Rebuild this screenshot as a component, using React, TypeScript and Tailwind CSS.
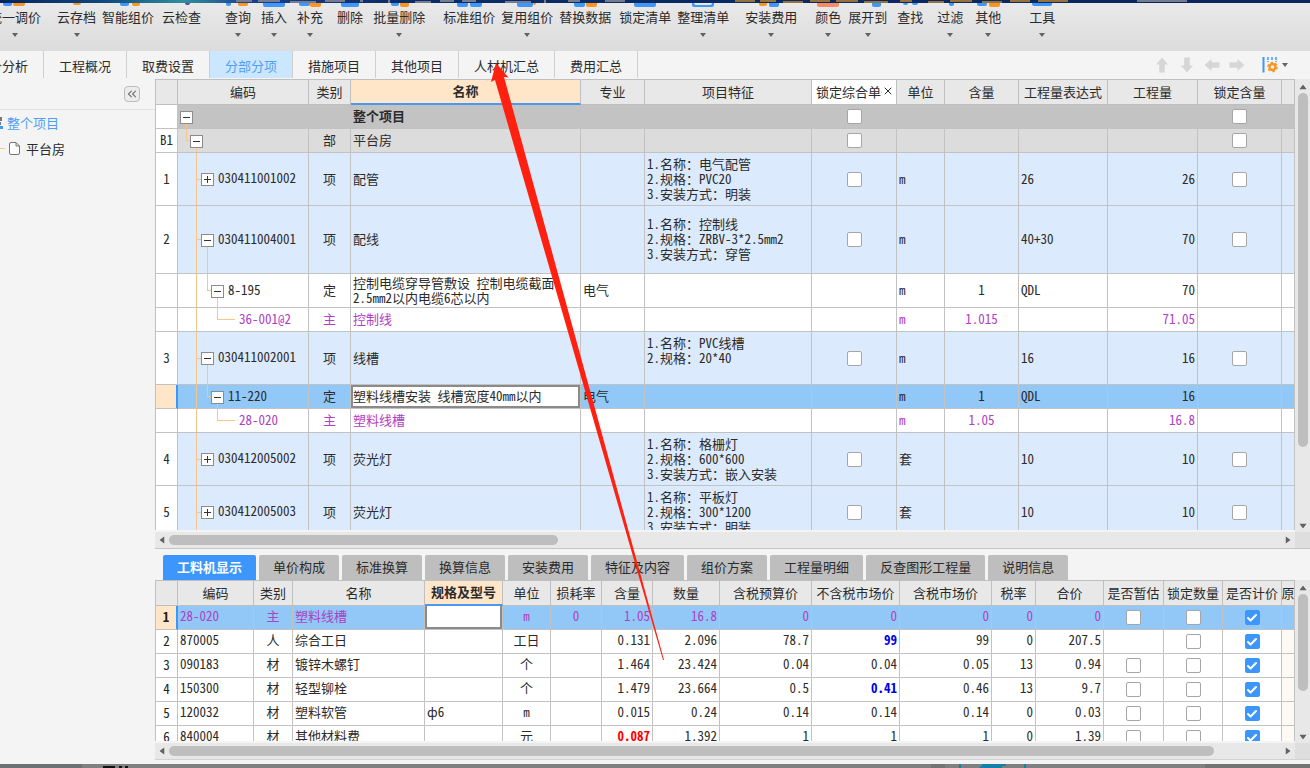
import React, { useState } from 'react';
import { Check, ChevronsLeft, X } from 'lucide-react';

type Shape = [number, number, number, string];

const BLUE = '#3f97f7';
const ORANGE = '#fb9420';

const tools: { label: string; gap: string; menu?: boolean; shapes: Shape[] }[] = [
  { label: '统一调价', gap: '', menu: true, shapes: [[8, 9, 3, BLUE], [18, 12, 3, ORANGE]] },
  { label: '云存档', gap: 'ml-2.5', menu: true, shapes: [[16, 8, 2, ORANGE]] },
  { label: '智能组价', gap: '', shapes: [[12, 9, 3, BLUE], [24, 8, 3, ORANGE]] },
  { label: '云检查', gap: 'ml-0.5', shapes: [[23, 5, 2, '#6b3fae']] },
  { label: '查询', gap: 'ml-4.5', menu: true, shapes: [[8, 5, 3, BLUE], [20, 10, 3, ORANGE]] },
  { label: '插入', gap: 'ml-1', menu: true, shapes: [[9, 22, 4, BLUE]] },
  { label: '补充', gap: 'ml-1', menu: true, shapes: [[9, 11, 3, BLUE], [20, 11, 4, ORANGE]] },
  { label: '删除', gap: 'ml-2', shapes: [[11, 18, 4, BLUE]] },
  { label: '批量删除', gap: 'ml-1', menu: true, shapes: [[12, 8, 3, BLUE], [21, 9, 4, ORANGE]] },
  { label: '标准组价', gap: 'ml-3', shapes: [[8, 11, 4, BLUE], [21, 12, 4, BLUE]] },
  { label: '复用组价', gap: '', menu: true, shapes: [[10, 16, 4, BLUE], [26, 3, 2, ORANGE]] },
  { label: '替换数据', gap: '', shapes: [[9, 11, 4, BLUE], [21, 11, 4, ORANGE]] },
  { label: '锁定清单', gap: 'ml-0.5', shapes: [[9, 22, 4, BLUE]] },
  { label: '整理清单', gap: '', menu: true, shapes: [[9, 22, 4, BLUE], [11, 18, 2, '#e8e8e8']] },
  { label: '安装费用', gap: 'ml-2.5', menu: true, shapes: [[8, 8, 3, ORANGE], [18, 10, 4, BLUE]] },
  { label: '颜色', gap: 'ml-3', menu: true, shapes: [[9, 22, 4, '#f98a62']] },
  { label: '展开到', gap: 'ml-px', menu: true, shapes: [[24, 9, 4, BLUE]] },
  { label: '查找', gap: 'ml-1', shapes: [[13, 5, 2, BLUE], [22, 6, 2, BLUE]] },
  { label: '过滤', gap: 'ml-2', menu: true, shapes: [[19, 5, 3, BLUE]] },
  { label: '其他', gap: 'ml-1.5', menu: true, shapes: [[9, 10, 3, BLUE], [21, 11, 4, ORANGE]] },
  { label: '工具', gap: 'ml-5.5', menu: true, shapes: [[10, 20, 3, BLUE]] },
];

const pages = ['造价分析', '工程概况', '取费设置', '分部分项', '措施项目', '其他项目', '人材机汇总', '费用汇总'];

const details = ['工料机显示', '单价构成', '标准换算', '换算信息', '安装费用', '特征及内容', '组价方案', '工程量明细', '反查图形工程量', '说明信息'];

type Item = {
  no: string;
  level: number;
  open?: boolean;
  code: string;
  kind: string;
  name: string;
  major?: string;
  feature?: string;
  unit?: string;
  content?: string;
  expr?: string;
  qty?: string;
  locks?: boolean;
  height: string;
  tone: string;
  selected?: boolean;
};

const group = 'bg-[#dceafd]';
const material = 'bg-white text-[#b040c4]';

const items: Item[] = [
  { no: '', level: 0, open: true, code: '', kind: '', name: '整个项目', locks: true, height: 'h-6', tone: 'bg-[#c3c3c3] font-bold' },
  { no: 'B1', level: 1, open: true, code: '', kind: '部', name: '平台房', locks: true, height: 'h-6', tone: 'bg-[#dcdcdc]' },
  { no: '1', level: 2, code: '030411001002', kind: '项', name: '配管', feature: '1.名称：电气配管\n2.规格：PVC20\n3.安装方式：明装', unit: 'm', expr: '26', qty: '26', locks: true, height: 'h-[53px]', tone: group },
  { no: '2', level: 2, open: true, code: '030411004001', kind: '项', name: '配线', feature: '1.名称：控制线\n2.规格：ZRBV-3*2.5mm2\n3.安装方式：穿管', unit: 'm', expr: '40+30', qty: '70', locks: true, height: 'h-[68px]', tone: group },
  { no: '', level: 3, open: true, code: '8-195', kind: '定', name: '控制电缆穿导管敷设 控制电缆截面\n2.5mm2以内电缆6芯以内', major: '电气', unit: 'm', content: '1', expr: 'QDL', qty: '70', height: 'h-[34px]', tone: 'bg-white' },
  { no: '', level: 4, code: '36-001@2', kind: '主', name: '控制线', unit: 'm', content: '1.015', qty: '71.05', height: 'h-6', tone: material },
  { no: '3', level: 2, open: true, code: '030411002001', kind: '项', name: '线槽', feature: '1.名称：PVC线槽\n2.规格：20*40\n ', unit: 'm', expr: '16', qty: '16', locks: true, height: 'h-[53px]', tone: group },
  { no: '', level: 3, open: true, code: '11-220', kind: '定', name: '塑料线槽安装 线槽宽度40mm以内', major: '电气', unit: 'm', content: '1', expr: 'QDL', qty: '16', height: 'h-6', tone: 'bg-[#92c8f7]', selected: true },
  { no: '', level: 4, code: '28-020', kind: '主', name: '塑料线槽', unit: 'm', content: '1.05', qty: '16.8', height: 'h-6', tone: material },
  { no: '4', level: 2, code: '030412005002', kind: '项', name: '荧光灯', feature: '1.名称：格栅灯\n2.规格：600*600\n3.安装方式：嵌入安装', unit: '套', expr: '10', qty: '10', locks: true, height: 'h-[53px]', tone: group },
  { no: '5', level: 2, code: '030412005003', kind: '项', name: '荧光灯', feature: '1.名称：平板灯\n2.规格：300*1200\n3.安装方式：明装', unit: '套', expr: '10', qty: '10', locks: true, height: 'h-[53px]', tone: group },
];

// code, kind, name, spec, unit, loss, content, qty, budget, net market, gross market, rate, total
const resources: { cells: string[]; estimate: boolean }[] = [
  { cells: ['28-020', '主', '塑料线槽', '', 'm', '0', '1.05', '16.8', '0', '0', '0', '0', '0'], estimate: true },
  { cells: ['870005', '人', '综合工日', '', '工日', '', '0.131', '2.096', '78.7', '99', '99', '0', '207.5'], estimate: false },
  { cells: ['090183', '材', '镀锌木螺钉', '', '个', '', '1.464', '23.424', '0.04', '0.04', '0.05', '13', '0.94'], estimate: true },
  { cells: ['150300', '材', '轻型铆栓', '', '个', '', '1.479', '23.664', '0.5', '0.41', '0.46', '13', '9.7'], estimate: true },
  { cells: ['120032', '材', '塑料软管', 'ф6', 'm', '', '0.015', '0.24', '0.14', '0.14', '0.14', '0', '0.03'], estimate: true },
  { cells: ['840004', '材', '其他材料费', '', '元', '', '0.087', '1.392', '1', '1', '1', '0', '1.39'], estimate: true },
];

const itemCols = ['w-[22px]', 'w-[131px]', 'w-[42px]', 'w-[230px]', 'w-[64px]', 'w-[167px]', 'w-[85px]', 'w-[48px]', 'w-[74px]', 'w-[89px]', 'w-[90px]', 'w-[84px]', ''];
const itemHeads = ['', '编码', '类别', '名称', '专业', '项目特征', '锁定综合单价', '单位', '含量', '工程量表达式', '工程量', '锁定含量', ''];

const resourceCols = ['w-[22px]', 'w-[76px]', 'w-[39px]', 'w-[132px]', 'w-[78px]', 'w-[48px]', 'w-[51px]', 'w-[51px]', 'w-[67px]', 'w-[92px]', 'w-[88px]', 'w-[92px]', 'w-[44px]', 'w-[68px]', 'w-[60px]', 'w-[59px]', 'w-[59px]', ''];
const resourceHeads = ['', '编码', '类别', '名称', '规格及型号', '单位', '损耗率', '含量', '数量', '含税预算价', '不含税市场价', '含税市场价', '税率', '合价', '是否暂估', '锁定数量', '是否计价', '原'];
const resourceAlign = ['', 'text-center', '', '', 'text-center', 'text-center', 'text-right', 'text-right', 'text-right', 'text-right', 'text-right', 'text-right', 'text-right'];

const head = 'h-[26px] border-y border-r border-[#bfbfbf] px-0 pt-0 pb-0.5 overflow-hidden whitespace-nowrap';
const activeHead = 'border-b-2 border-b-[#4a98f5] bg-[#ffe6c9] font-bold';
const plain = 'border-b border-r border-[#c2c2c2] p-0 overflow-hidden';
const cell = 'border-b border-r border-[#c2c2c2] px-0.5 pt-0 pb-0.5 overflow-hidden whitespace-pre';
const lowCell = 'border-b border-r border-[#c2c2c2] px-0.5 pt-0 pb-1 overflow-hidden whitespace-pre';

const Caret = ({ className = '' }: { className?: string }) => (
  <svg viewBox="0 0 6 4" className={`h-1 w-1.5 ${className}`} aria-hidden="true">
    <path d="M0 0h6L3 4z" fill="#626262" />
  </svg>
);

const Box = ({ label, on = false }: { label: string; on?: boolean }) => (
  <label className="mx-auto grid size-[15px] place-items-center">
    <input
      type="checkbox"
      aria-label={label}
      defaultChecked={on}
      className="peer col-start-1 row-start-1 size-[15px] appearance-none rounded-xs border border-[#a6a6a6] bg-white checked:border-[#3d96fb] checked:bg-[#3d96fb]"
    />
    <Check className="pointer-events-none col-start-1 row-start-1 hidden size-3 text-white peer-checked:block" strokeWidth={4} />
  </label>
);

const Arm = ({ width }: { width: string }) => (
  <span className={`${width} shrink-0`}>
    <span className="block h-1/2 border-b border-l border-[#f7c587]" />
  </span>
);

const Tree = ({ item }: { item: Item }) => (
  <div className={`flex items-stretch ${item.height}`}>
    {item.level === 0 && <span className="w-0.5 shrink-0" />}
    {item.level === 1 && <span className="w-2 shrink-0" />}
    {item.level > 1 && <span className="w-[18px] shrink-0" />}
    {item.level === 1 && <Arm width="w-1" />}
    {item.level === 2 && (
      <span className="w-[5px] shrink-0 border-l border-[#f7c587]">
        <span className="block h-1/2 border-b border-[#f7c587]" />
      </span>
    )}
    {item.level === 3 && <span className="w-[11px] shrink-0 border-l border-[#f7c587]" />}
    {item.level === 3 && <Arm width="w-1" />}
    {item.level === 4 && <span className="w-[21px] shrink-0 border-l border-[#f7c587]" />}
    {item.level === 4 && <Arm width="w-[18px]" />}
    {item.level < 4 && (
      <span className="flex w-[13px] shrink-0 flex-col items-center">
        <span className="flex-1" />
        <button type="button" aria-label={item.open ? '折叠' : '展开'} className="block size-[13px] border border-[#8c8c8c] bg-white">
          <svg viewBox="0 0 11 11" className="block size-[11px]">
            <path d={item.open ? 'M2 5.5h7' : 'M2 5.5h7M5.5 2v7'} stroke="#333" strokeWidth="1" fill="none" />
          </svg>
        </button>
        <span className={`w-px flex-1 ${item.open ? 'bg-[#f7c587]' : ''}`} />
      </span>
    )}
    <span className="self-center pb-1 pl-1">{item.code}</span>
  </div>
);

const VScroll = ({ thumb }: { thumb: string }) => (
  <div className="flex flex-col items-center bg-[#e8e8e8] pt-1.5 pb-1">
    <Caret className="rotate-180 scale-125" />
    <div className="flex w-full flex-1 flex-col items-center py-1">
      <div className={`w-[10px] rounded-full bg-[#bebebe] ${thumb}`} />
    </div>
    <Caret className="scale-125" />
  </div>
);

const HScroll = ({ thumb }: { thumb: string }) => (
  <div className="flex items-center bg-[#e8e8e8] pr-1 pl-1">
    <Caret className="rotate-90 scale-125" />
    <div className="flex-1 px-1">
      <div className={`h-[10px] rounded-full bg-[#bebebe] ${thumb}`} />
    </div>
    <Caret className="-rotate-90 scale-125" />
  </div>
);

const ItemTable = () => (
  <table className="w-full table-fixed border-separate border-spacing-0 border-l border-[#bfbfbf] leading-[15px]">
    <colgroup>
      {itemCols.map((width, i) => (
        <col key={i} className={width} />
      ))}
    </colgroup>
    <thead>
      <tr>
        {itemHeads.map((title, i) => (
          <th key={i} className={`${head} ${i === 3 ? activeHead : i === 6 ? 'bg-white font-normal' : 'bg-[#e8e8e8] font-normal'}`}>
            {i === 6 ? (
              <span className="flex items-center pl-1">
                <span className="flex-1 overflow-hidden">{title}</span>
                <X className="mr-0.5 size-3" />
              </span>
            ) : (
              title
            )}
          </th>
        ))}
      </tr>
    </thead>
    <tbody>
      {items.map((item, i) => (
        <tr key={i} className={`${item.height} ${item.tone}`}>
          <th
            className={`${cell} text-center font-normal ${
              item.selected ? 'border-r-2 border-r-[#3d96fb] bg-[#ffe6c9]' : 'bg-white'
            }`}
          >
            {item.no}
          </th>
          <td className={plain}>
            <div className="-mb-px">
              <Tree item={item} />
            </div>
          </td>
          <td className={`${cell} text-center`}>{item.kind}</td>
          {item.selected ? (
            <td className={plain}>
              <input
                aria-label="名称"
                defaultValue={item.name}
                className="block h-[23px] w-full border-2 border-[#8a8a8a] bg-white pb-0.5 outline-none"
              />
            </td>
          ) : (
            <td className={cell}>{item.name}</td>
          )}
          <td className={cell}>{item.major}</td>
          <td className={cell}>{item.feature}</td>
          <td className={plain}>{item.locks && <Box label="锁定综合单价" />}</td>
          <td className={cell}>{item.unit}</td>
          <td className={`${cell} text-center`}>{item.content}</td>
          <td className={cell}>{item.expr}</td>
          <td className={`${cell} text-right`}>{item.qty}</td>
          <td className={plain}>{item.locks && <Box label="锁定含量" />}</td>
          <td className={plain} />
        </tr>
      ))}
    </tbody>
  </table>
);

const emphasis = (row: number, col: number) => {
  if (col === 9 && (row === 1 || row === 3)) return 'font-bold text-[#0000e6]';
  if (col === 6 && row === 5) return 'font-bold text-[#f00]';
  return '';
};

const ResourceTable = () => (
  <table className="w-full table-fixed border-separate border-spacing-0 border-l border-[#bfbfbf] leading-[15px]">
    <colgroup>
      {resourceCols.map((width, i) => (
        <col key={i} className={width} />
      ))}
    </colgroup>
    <thead>
      <tr>
        {resourceHeads.map((title, i) => (
          <th key={i} className={`${head} ${i === 4 ? activeHead : 'bg-[#e8e8e8] font-normal'}`}>
            <span className="flex justify-center">{title}</span>
          </th>
        ))}
      </tr>
    </thead>
    <tbody>
      {resources.map((row, r) => (
        <tr key={r} className={`h-6 ${r === 0 ? 'bg-[#92c8f7] text-[#b040c4]' : 'bg-white'}`}>
          <th
            className={`${cell} text-center text-[#222] ${
              r === 0 ? 'border-r-2 border-r-[#3d96fb] bg-[#ffe6c9] font-bold' : 'bg-white font-normal'
            }`}
          >
            {r + 1}
          </th>
          {row.cells.map((text, c) =>
            r === 0 && c === 3 ? (
              <td key={c} className={plain}>
                <input aria-label="规格及型号" className="block h-[23px] w-full border-2 border-t-0 border-[#8a8a8a] bg-white outline-none" />
              </td>
            ) : (
              <td key={c} className={`${lowCell} ${resourceAlign[c]} ${emphasis(r, c)}`}>
                {text}
              </td>
            )
          )}
          <td className={plain}>{row.estimate && <Box label="是否暂估" />}</td>
          <td className={plain}>
            <Box label="锁定数量" />
          </td>
          <td className={plain}>
            <Box label="是否计价" on />
          </td>
          <td className={`${plain} ${r === 0 ? '' : 'bg-[#fdf9f3]'}`} />
        </tr>
      ))}
    </tbody>
  </table>
);

const FatArrow = ({ turn, label }: { turn: string; label: string }) => (
  <button type="button" aria-label={label} className="size-4">
    <svg viewBox="0 0 16 16" className={`size-4 ${turn}`}>
      <path d="M8 .5 14 7.500h-3.200V15.500H5.200V7.500H2z" fill="#d6d6d6" />
    </svg>
  </button>
);

const App = () => {
  const [page, setPage] = useState('分部分项');
  const [detail, setDetail] = useState('工料机显示');

  return (
    <div className="relative flex h-screen flex-col overflow-hidden bg-[#f4f4f4] font-['Noto_Sans_Mono_CJK_SC','Noto_Sans_CJK_SC',sans-serif] text-[13px] text-[#2b2b2b]">
      {/* Edge of the window behind */}
      <svg viewBox="0 0 1310 3" preserveAspectRatio="none" className="block h-[3px] w-full shrink-0" aria-hidden="true">
        <defs>
          <linearGradient id="sky">
            <stop offset="0" stopColor="#07245c" />
            <stop offset="0.08" stopColor="#10487f" />
            <stop offset="0.14" stopColor="#2f8f9b" />
            <stop offset="0.19" stopColor="#1a3f8f" />
            <stop offset="0.3" stopColor="#0b2c66" />
            <stop offset="1" stopColor="#0a2560" />
          </linearGradient>
        </defs>
        <path d="M0 0h1310v3H0z" fill="url(#sky)" />
        <path d="M236 1h16M258 1h22M290 2h26M325 1h20M360 1h3M389 0v3M415 2h16M440 1h14M462 1h14M505 2h26M545 0v3M568 1h12M605 1h20M1137 1h50" stroke="#737c90" strokeWidth="2" />
        <path d="M735 1h20M760 1h16M783 2h20M810 1h20M836 1h22M864 2h24M900 1h12M928 2h16M950 1h22M982 2h20M1010 1h20M1038 1h30" stroke="#94723d" strokeWidth="2" />
      </svg>

      {/* Toolbar */}
      <div className="flex h-12 shrink-0 items-start overflow-hidden bg-gradient-to-b from-[#e9e9e9] to-[#dcdcdc]">
        {tools.map((tool, i) => (
          <button
            key={tool.label}
            type="button"
            className={`flex shrink-0 flex-col items-center px-[3px] leading-4 whitespace-nowrap ${tool.gap} ${i === 0 ? '-ml-3.5' : ''}`}
          >
            <svg viewBox="0 0 40 4" className="-mx-2 h-1 w-10" aria-hidden="true">
              {tool.shapes.map(([x, w, h, fill], n) => (
                <rect key={n} x={x} y={-4} width={w} height={h + 4} rx="2" fill={fill} />
              ))}
            </svg>
            <span className="mt-0.5">{tool.label}</span>
            {tool.menu && <Caret className="mt-2" />}
          </button>
        ))}
      </div>

      {/* Page tabs */}
      <div className="flex h-7 shrink-0 items-stretch justify-between pr-[22px]">
        <nav className="flex h-[27px] overflow-hidden">
          {pages.map((name, i) => (
            <button
              key={name}
              type="button"
              onClick={() => setPage(name)}
              className={`shrink-0 border-r border-[#cfcfcf] px-[15px] pt-0.5 whitespace-nowrap ${i === 0 ? '-ml-[39px]' : ''} ${
                page === name ? 'bg-[#cbe6ff] text-[#4f9ff5]' : ''
              }`}
            >
              {name}
            </button>
          ))}
        </nav>
        <div className="flex items-center gap-[9px]">
          <FatArrow turn="" label="上移" />
          <FatArrow turn="rotate-180" label="下移" />
          <FatArrow turn="-rotate-90" label="左移" />
          <FatArrow turn="rotate-90" label="右移" />
          <button type="button" aria-label="列设置" className="ml-2 flex items-center gap-1">
            <svg viewBox="0 0 16 16" className="size-4">
              <path d="M1.500 0v15.500" stroke="#3f97f7" strokeWidth="2" />
              <path d="M6 0v5M10 0v4M14 0v5" stroke="#3f97f7" strokeWidth="1.500" strokeDasharray="3 1" />
              <circle cx="10.500" cy="10" r="3" fill="none" stroke="#fb9420" strokeWidth="2.400" />
              <circle cx="10.500" cy="10" r="4.600" fill="none" stroke="#fb9420" strokeWidth="1.400" strokeDasharray="2.400 2.400" />
            </svg>
            <Caret />
          </button>
        </div>
      </div>

      <div className="flex min-h-0 flex-1">
        {/* Project tree */}
        <aside className="w-[155px] shrink-0">
          <div className="flex h-[31px] justify-end border-b border-[#e2e2e2] pt-[7px] pr-[15px]">
            <button type="button" aria-label="收起" className="grid size-4 place-items-center rounded-sm border border-[#bdbdbd] bg-[#ececec] text-[#777]">
              <ChevronsLeft className="size-3.5" />
            </button>
          </div>
          <ul>
            <li className="flex h-[26px] items-center gap-1 text-[#4f9ff5]">
              <svg viewBox="0 0 3 14" className="h-3.5 w-[3px]" aria-hidden="true">
                <path d="M0 1h2v4H0zM0 6h1v3H0z" fill="#777" />
                <path d="M0 10h3v3H0z" fill="#3f97f7" />
              </svg>
              <a href="#project">整个项目</a>
            </li>
            <li className="flex h-[25px] items-center">
              <span className="mr-1 h-px w-[5px] bg-[#f7c587]" />
              <svg viewBox="0 0 11 13" className="mr-1.5 h-[13px] w-[11px]" fill="white" stroke="#777" aria-hidden="true">
                <path d="M.5 2Q.5.5 2 .5h5l3.500 3.500v7q0 1.500-1.500 1.500H2Q.5 12.500.5 11zM7 .5V4h3.500" />
              </svg>
              <a href="#house">平台房</a>
            </li>
          </ul>
        </aside>

        <main className="flex min-w-0 flex-1 flex-col">
          <section className="grid min-h-0 flex-1 grid-cols-[1fr_15px] grid-rows-[1fr_16px] border-b border-[#c4c4c4]">
            <div className="mb-0.5 overflow-hidden">
              <ItemTable />
            </div>
            <VScroll thumb="h-[83%]" />
            <HScroll thumb="w-[35%]" />
            <div className="bg-[#dedede]" />
          </section>

          <section className="flex h-[211px] shrink-0 flex-col pt-1.5">
            <div className="flex gap-[3px] pl-2">
              {details.map((name) => (
                <button
                  key={name}
                  type="button"
                  onClick={() => setDetail(name)}
                  className={`h-[25px] shrink-0 rounded-t-xs px-3.5 pb-0.5 whitespace-nowrap ${
                    detail === name ? 'bg-[#3d96fb] font-bold text-white' : 'bg-[#bebebe]'
                  }`}
                >
                  {name}
                </button>
              ))}
            </div>
            <div className="grid min-h-0 flex-1 grid-cols-[1fr_15px] grid-rows-[1fr_16px] border-b border-[#d2d2d2]">
              <div className="mb-0.5 overflow-hidden">
                <ResourceTable />
              </div>
              <VScroll thumb="h-[71%]" />
              <HScroll thumb="w-[94%]" />
              <div className="bg-[#dedede]" />
            </div>
          </section>
          <div className="h-1 shrink-0" />
        </main>
      </div>

      <svg viewBox="0 0 1310 4" preserveAspectRatio="none" className="block h-1 w-full shrink-0" aria-hidden="true">
        <path d="M0 0h1310v4H0z" fill="#808080" />
        <path d="M0 0h82v4H0z" fill="#6c7176" />
        <path d="M931 0h14v4h-14zM1205 0h105v4h-105z" fill="#747474" />
        <path d="M103 3h12M119 3h3M125 3h3" stroke="#111" strokeWidth="2" />
        <path d="M960 0v4M1025 0v4M982 1h24M980 3h22" stroke="#177fa8" strokeWidth="2" />
      </svg>

      {/* Pointer from the quantity column to the summary tab */}
      <svg width="1310" height="768" viewBox="0 0 1310 768" className="pointer-events-none absolute top-0 left-0 max-w-none" aria-hidden="true">
        <path d="M496 63 508.500 77.500 504 77 664 660h-1L495 80 491 82z" fill="#ff2010" />
      </svg>
    </div>
  );
};

export default App;
